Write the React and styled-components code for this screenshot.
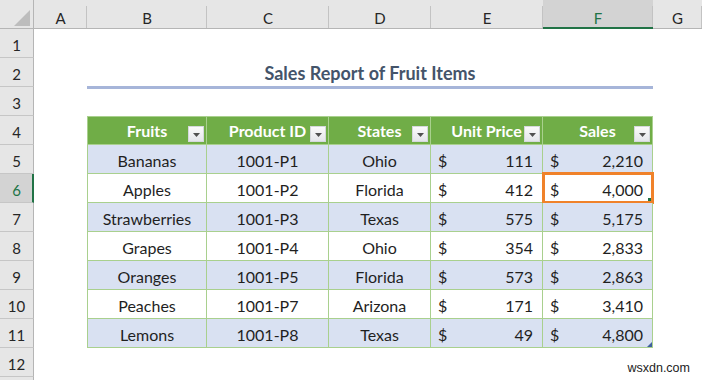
import React from 'react';
import styled, { createGlobalStyle, css } from 'styled-components';

const GlobalStyle = createGlobalStyle`
  html, body { margin: 0; padding: 0; background: #ffffff; overflow: hidden; }
  body { font-family: Lato, "Open Sans", sans-serif; }
  * { box-sizing: border-box; }
`;

const Sheet = styled.div`
  position: relative;
  display: grid;
  grid-template-columns: 34px 53px 120px 122px 102px 112px 110px 49px;
  grid-auto-rows: 29px;
  width: 702px;
  height: 380px;
  overflow: hidden;
  font-family: Lato, sans-serif;
  color: #1f1f1f;
`;

const Corner = styled.div`
  display: flex;
  align-items: flex-end;
  justify-content: flex-end;
  padding: 0 3px 2px 0;
  background: #e6e6e6;
  border-right: 1px solid #b5b5b5;
  border-bottom: 1px solid #b5b5b5;
`;

const ColHead = styled.div`
  position: relative;
  display: flex;
  align-items: flex-end;
  justify-content: center;
  padding-bottom: ${p => (p.$active ? '0' : '1px')};
  background: ${p => (p.$active ? '#d3d3d3' : '#e6e6e6')};
  color: ${p => (p.$active ? '#217346' : '#262626')};
  border-bottom: ${p => (p.$active ? '2px solid #217346' : '1px solid #b5b5b5')};
  font-size: 15px;
  &::after {
    content: '';
    position: absolute;
    top: 6px;
    bottom: 0;
    right: 0;
    width: 1px;
    background: #c3c3c3;
  }
`;

const RowHead = styled.div`
  display: flex;
  align-items: flex-end;
  justify-content: center;
  padding-bottom: 3px;
  padding-left: ${p => (p.$active ? '1px' : '0')};
  background: ${p => (p.$active ? '#d3d3d3' : '#e6e6e6')};
  color: ${p => (p.$active ? '#217346' : '#262626')};
  border-right: ${p => (p.$active ? '2px solid #217346' : '1px solid #b5b5b5')};
  border-bottom: 1px solid #c6c6c6;
  font-size: 15px;
`;

const Blank = styled.div``;

const Title = styled.div`
  grid-column: span 5;
  display: flex;
  align-items: flex-end;
  justify-content: center;
  padding-bottom: 2px;
  margin-bottom: -2px;
  border-bottom: 3px solid #a6b5d9;
  color: #44546a;
  font-weight: 700;
  font-size: 18px;
`;

const Cell = styled.div`
  position: relative;
  display: flex;
  align-items: flex-end;
  justify-content: center;
  padding-bottom: 3px;
  font-size: 16px;
  border-right: 1px solid #a9d08e;
  border-bottom: 1px solid #a9d08e;
  ${p => p.$first && css`border-left: 1px solid #a9d08e;`}
  background: ${p => (p.$band ? '#d9e1f2' : '#ffffff')};
`;

const HeadCell = styled(Cell)`
  border-top: 1px solid #a9d08e;
  background: #70ad47;
  color: #ffffff;
  font-weight: 700;
  padding-bottom: 4px;
`;

const MoneyCell = styled(Cell)`
  justify-content: space-between;
  padding-left: 7px;
  padding-right: 9px;
`;

const FilterButton = styled.span`
  position: absolute;
  right: 2px;
  bottom: 2px;
  width: 16px;
  height: 16px;
  display: flex;
  align-items: center;
  justify-content: center;
  padding-top: 2px;
  background: linear-gradient(#fbfbfb, #e4e6ea);
  border: 1px solid #d5d8dc;
`;

const Selection = styled.div`
  position: absolute;
  top: -2px;
  left: -1px;
  right: -2px;
  bottom: -2px;
  border: 3px solid #f0822a;
  pointer-events: none;
`;

const FillHandle = styled.span`
  position: absolute;
  right: 0px;
  bottom: 0px;
  width: 3px;
  height: 3px;
  background: #217346;
`;

const ResizeHandle = styled.svg`
  position: absolute;
  right: 0;
  bottom: 0;
`;

const Watermark = styled.div`
  position: absolute;
  right: 12px;
  top: 361px;
  font-family: "Liberation Sans", Arial, sans-serif;
  font-size: 12.5px;
  color: #222222;
`;

const COLS = ['A', 'B', 'C', 'D', 'E', 'F', 'G'];
const HEADERS = ['Fruits', 'Product ID', 'States', 'Unit Price', 'Sales'];
const DATA = [
  ['Bananas', '1001-P1', 'Ohio', '111', '2,210'],
  ['Apples', '1001-P2', 'Florida', '412', '4,000'],
  ['Strawberries', '1001-P3', 'Texas', '575', '5,175'],
  ['Grapes', '1001-P4', 'Ohio', '354', '2,833'],
  ['Oranges', '1001-P5', 'Florida', '573', '2,863'],
  ['Peaches', '1001-P7', 'Arizona', '171', '3,410'],
  ['Lemons', '1001-P8', 'Texas', '49', '4,800'],
];

const Arrow = () => (
  <svg width="7" height="4" viewBox="0 0 7 4">
    <polygon points="0,0 7,0 3.5,4" fill="#505050" />
  </svg>
);

function renderRow(r) {
  const cells = [];
  if (r === 2) {
    cells.push(<Blank key="a" />);
    cells.push(<Title key="t">Sales Report of Fruit Items</Title>);
    cells.push(<Blank key="g" />);
  } else if (r === 4) {
    cells.push(<Blank key="a" />);
    HEADERS.forEach((h, i) => {
      cells.push(
        <HeadCell key={h} $first={i === 0}>
          {h}
          <FilterButton>
            <Arrow />
          </FilterButton>
        </HeadCell>
      );
    });
    cells.push(<Blank key="g" />);
  } else if (r >= 5 && r <= 11) {
    const d = DATA[r - 5];
    const band = r % 2 === 1;
    const last = r === 11;
    cells.push(<Blank key="a" />);
    cells.push(<Cell key="b" $first $band={band}>{d[0]}</Cell>);
    cells.push(<Cell key="c" $band={band}>{d[1]}</Cell>);
    cells.push(<Cell key="d" $band={band}>{d[2]}</Cell>);
    cells.push(
      <MoneyCell key="e" $band={band}>
        <span>$</span>
        <span>{d[3]}</span>
      </MoneyCell>
    );
    cells.push(
      <MoneyCell key="f" $band={band}>
        <span>$</span>
        <span>{d[4]}</span>
        {r === 6 && (
          <Selection>
            <FillHandle />
          </Selection>
        )}
        {last && (
          <ResizeHandle width="5" height="5" viewBox="0 0 5 5">
            <polygon points="5,0 5,5 0,5" fill="#3f5f9f" />
          </ResizeHandle>
        )}
      </MoneyCell>
    );
    cells.push(<Blank key="g" />);
  } else {
    COLS.forEach(c => cells.push(<Blank key={c} />));
  }
  return cells;
}

export default function App() {
  const rows = Array.from({ length: 12 }, (_, i) => i + 1);
  return (
    <>
      <GlobalStyle />
      <Sheet>
        <Corner>
          <svg width="16" height="16" viewBox="0 0 16 16">
            <polygon points="16,0 16,16 0,16" fill="#bdbdbd" />
          </svg>
        </Corner>
        {COLS.map(c => (
          <ColHead key={c} $active={c === 'F'}>{c}</ColHead>
        ))}
        {rows.map(r => (
          <React.Fragment key={r}>
            <RowHead $active={r === 6}>{r}</RowHead>
            {renderRow(r)}
          </React.Fragment>
        ))}
        <RowHead />
        <Watermark>wsxdn.com</Watermark>
      </Sheet>
    </>
  );
}
